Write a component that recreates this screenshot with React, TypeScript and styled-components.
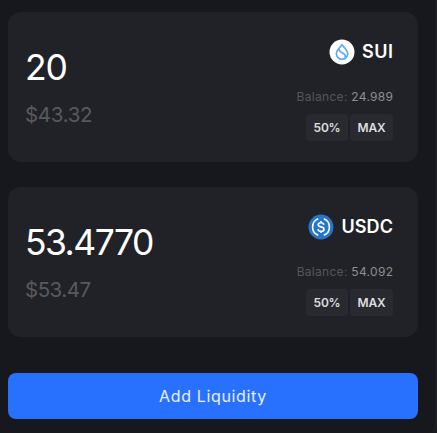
import React from "react";
import styled, { createGlobalStyle } from "styled-components";

const GlobalStyle = createGlobalStyle`
  *, *::before, *::after { box-sizing: border-box; }
  body {
    margin: 0;
    background: #1a1b20;
    font-family: Inter, "Liberation Sans", sans-serif;
    color: #ffffff;
    overflow: hidden;
  }
`;

const Panel = styled.main`
  width: 436px;
  height: 433px;
  padding: 12px 17px 14px 8px;
  background: #17181d;
  border-right: 1px solid #202126;
  border-bottom-right-radius: 8px;
  display: flex;
  flex-direction: column;
`;

const Card = styled.section`
  flex: none;
  height: 150px;
  margin-bottom: 25px;
  padding: 0 25px 0 17px;
  border-radius: 13px;
  background: #212227;
  display: flex;
  justify-content: space-between;
`;

const AmountColumn = styled.div`
  display: flex;
  flex-direction: column;
  padding-top: 34px;
`;

const Amount = styled.div<{ $spacing: number }>`
  font-size: 35.5px;
  line-height: 44px;
  font-weight: 400;
  letter-spacing: ${(p) => p.$spacing}px;
  white-space: nowrap;
`;

const FiatValue = styled.div<{ $spacing: number }>`
  margin-top: 12px;
  font-size: 20.5px;
  line-height: 26px;
  letter-spacing: ${(p) => p.$spacing}px;
  color: #58595d;
`;

const TokenColumn = styled.div`
  display: flex;
  flex-direction: column;
  align-items: flex-end;
  padding-top: 27px;
`;

const Token = styled.div`
  height: 26px;
  display: flex;
  align-items: center;
  gap: 7px;
`;

const Symbol = styled.span<{ $spacing: number }>`
  font-size: 18px;
  line-height: 24px;
  font-weight: 600;
  letter-spacing: ${(p) => p.$spacing}px;
  margin-right: ${(p) => -p.$spacing}px;
`;

const Balance = styled.div`
  margin-top: 23px;
  font-size: 12px;
  line-height: 18px;
  letter-spacing: 0.3px;
  margin-right: -0.3px;
  color: #55565b;
`;

const BalanceAmount = styled.span`
  color: #8d8e91;
`;

const Shortcuts = styled.div`
  margin-top: 8px;
  display: flex;
  gap: 2px;
`;

const ShortcutButton = styled.button<{ $width: number }>`
  width: ${(p) => p.$width}px;
  height: 27px;
  padding: 0;
  border: 0;
  border-radius: 4px;
  background: #292a2f;
  color: #dededf;
  font: 600 12px/27px Inter, "Liberation Sans", sans-serif;
  letter-spacing: -0.2px;
`;

const SubmitButton = styled.button`
  flex: none;
  width: 410px;
  height: 46px;
  margin-top: 11px;
  padding: 0;
  border: 0;
  border-radius: 8px;
  background: #2871ff;
  color: #e9f0ff;
  font: 400 16px/46px Inter, "Liberation Sans", sans-serif;
  letter-spacing: 0.65px;
`;

const SuiIcon = () => (
  <svg width="26" height="26" viewBox="0 0 26 26" fill="none">
    <circle cx="13" cy="13" r="12.5" fill="#fff" />
    <path
      d="M13 5.7C11.3 7.9 7.3 11.4 7.3 14.6a5.7 5.7 0 0 0 11.4 0C18.7 11.4 14.7 7.9 13 5.7Z"
      stroke="#58a8fb"
      strokeWidth="1.6"
      strokeLinejoin="round"
    />
    <path
      d="M10 9.9C9.9 12.2 11.3 13 13.5 14c2.2 1 3.2 2.4 2.6 4.7"
      stroke="#58a8fb"
      strokeWidth="1.6"
    />
  </svg>
);

const UsdcIcon = () => (
  <svg width="26" height="26" viewBox="0 0 26 26" fill="none">
    <circle cx="13" cy="13" r="12.5" fill="#2775ca" />
    <path
      d="M10.2 4.8a8.8 8.8 0 0 0 0 16.4M15.8 4.8a8.8 8.8 0 0 1 0 16.4"
      stroke="#fff"
      strokeWidth="1.6"
    />
    <path
      d="M15.8 10.8c-.2-1.3-1.2-2-2.8-2-1.7 0-2.8.8-2.8 2 0 1.3 1 1.8 2.8 2.1 2 .3 3 .9 3 2.3 0 1.3-1.2 2.1-3 2.1-1.8 0-2.9-.8-3.1-2.2M13 7v1.8M13 17.3v1.8"
      stroke="#fff"
      strokeWidth="1.6"
    />
  </svg>
);

interface TokenCardProps {
  amount: string;
  amountSpacing: number;
  fiat: string;
  fiatSpacing: number;
  symbol: string;
  symbolSpacing: number;
  balance: string;
  icon: React.ReactNode;
}

const TokenCard = (p: TokenCardProps) => (
  <Card>
    <AmountColumn>
      <Amount $spacing={p.amountSpacing}>{p.amount}</Amount>
      <FiatValue $spacing={p.fiatSpacing}>{p.fiat}</FiatValue>
    </AmountColumn>
    <TokenColumn>
      <Token>
        {p.icon}
        <Symbol $spacing={p.symbolSpacing}>{p.symbol}</Symbol>
      </Token>
      <Balance>
        Balance: <BalanceAmount>{p.balance}</BalanceAmount>
      </Balance>
      <Shortcuts>
        <ShortcutButton $width={42}>50%</ShortcutButton>
        <ShortcutButton $width={43}>MAX</ShortcutButton>
      </Shortcuts>
    </TokenColumn>
  </Card>
);

export default function App() {
  return (
    <>
      <GlobalStyle />
      <Panel>
        <TokenCard
          amount="20"
          amountSpacing={-1.2}
          fiat="$43.32"
          fiatSpacing={-0.3}
          symbol="SUI"
          symbolSpacing={0.5}
          balance="24.989"
          icon={<SuiIcon />}
        />
        <TokenCard
          amount="53.4770"
          amountSpacing={-1.55}
          fiat="$53.47"
          fiatSpacing={-0.5}
          symbol="USDC"
          symbolSpacing={0.1}
          balance="54.092"
          icon={<UsdcIcon />}
        />
        <SubmitButton>Add Liquidity</SubmitButton>
      </Panel>
    </>
  );
}
